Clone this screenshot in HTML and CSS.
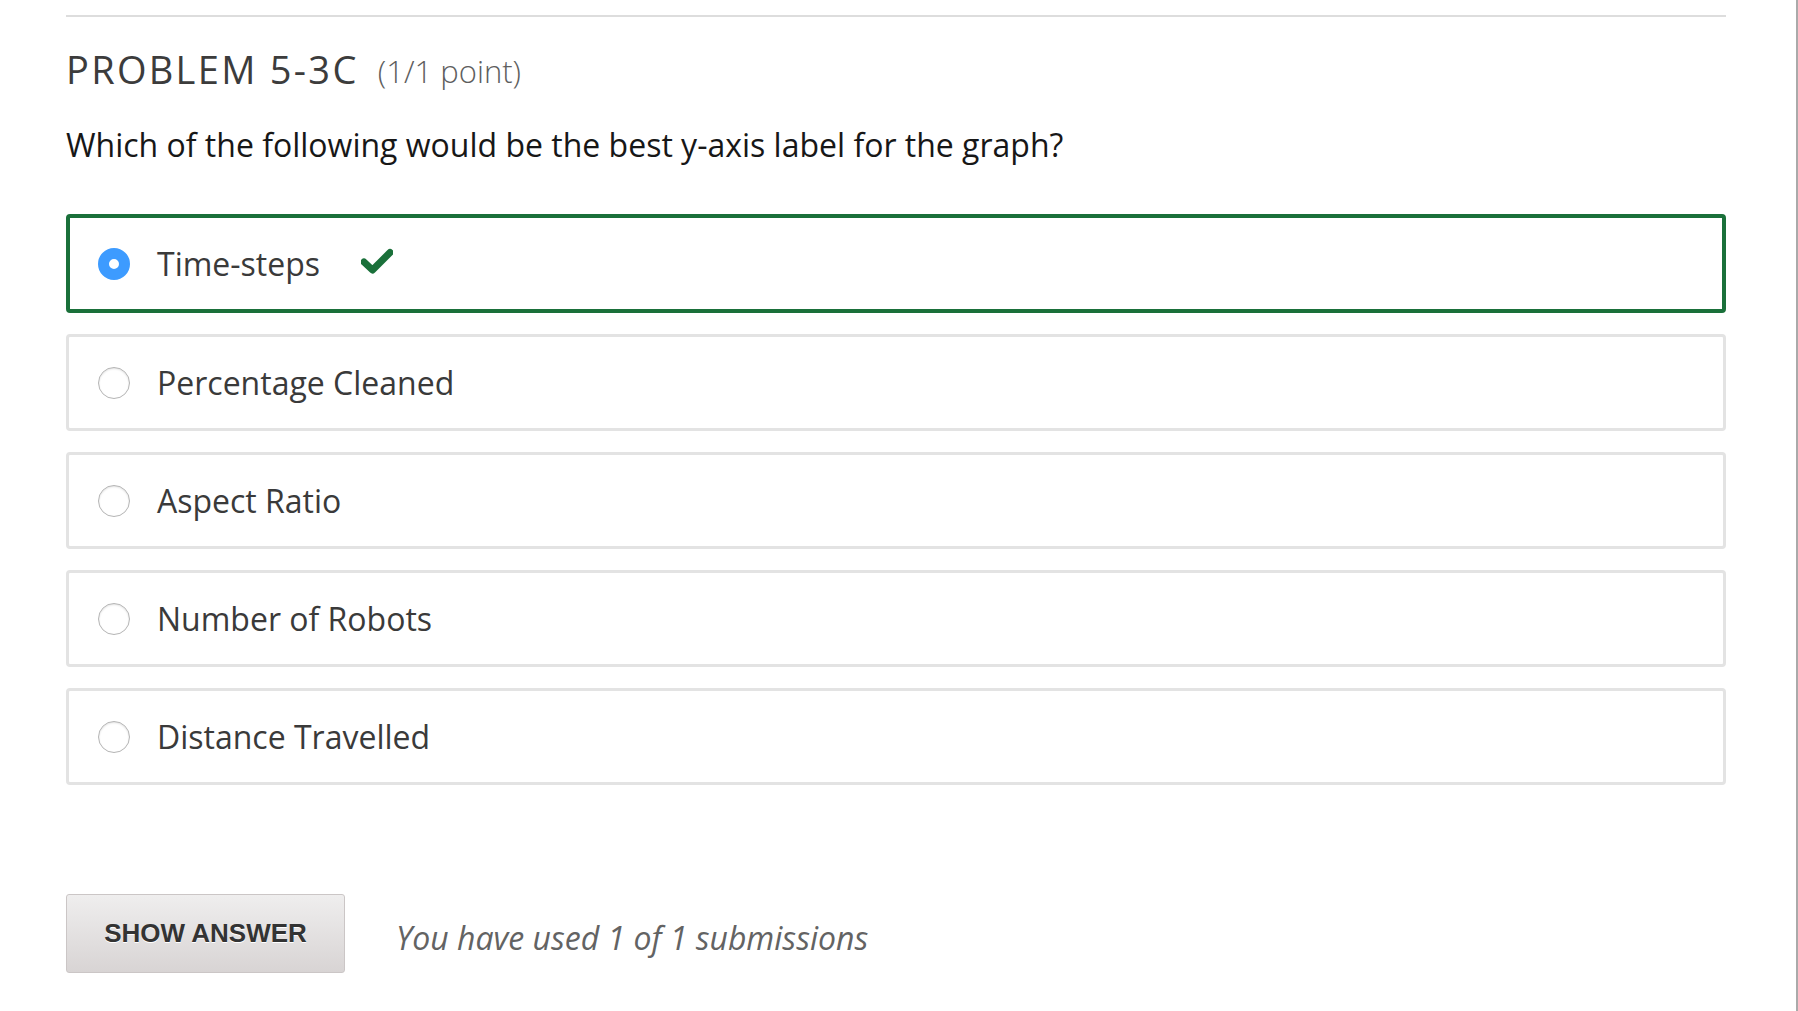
FILE: index.html
```html
<!DOCTYPE html>
<html>
<head>
<meta charset="utf-8">
<link rel="stylesheet" href="styles.css">
</head>
<body>
<div class="page">
  <div class="problem">
    <hr class="rule">
    <h2 class="title">PROBLEM 5-3C <span class="points">(1/1 point)</span></h2>
    <p class="question">Which of the following would be the best y-axis label for the graph?</p>
    <div class="choices">
      <label class="choice correct">
        <span class="radio checked"></span>
        <span class="label">Time-steps</span>
        <svg class="check" viewBox="0 0 32 26" width="32" height="26"><path d="M3 14 L11.5 22 L29 4.5" fill="none" stroke="#1a703a" stroke-width="7" stroke-linecap="round" stroke-linejoin="round"/></svg>
      </label>
      <label class="choice">
        <span class="radio"></span>
        <span class="label">Percentage Cleaned</span>
      </label>
      <label class="choice">
        <span class="radio"></span>
        <span class="label">Aspect Ratio</span>
      </label>
      <label class="choice">
        <span class="radio"></span>
        <span class="label">Number of Robots</span>
      </label>
      <label class="choice">
        <span class="radio"></span>
        <span class="label">Distance Travelled</span>
      </label>
    </div>
    <div class="actions">
      <button class="show-answer">SHOW ANSWER</button>
      <span class="submissions">You have used 1 of 1 submissions</span>
    </div>
  </div>
</div>
</body>
</html>
```

FILE: styles.css
```css
html, body {
  margin: 0;
  padding: 0;
  background: #fff;
}
body {
  font-family: "Open Sans", "Noto Sans", sans-serif;
  color: #313131;
}
.page {
  width: 1796px;
  height: 1011px;
  border-right: 2px solid #aaaaaa;
  box-sizing: content-box;
  overflow: hidden;
}
.problem {
  width: 1660px;
  padding-left: 66px;
  padding-top: 15px;
}
.rule {
  margin: 0;
  border: none;
  height: 2px;
  background: #dddddd;
}
.title {
  margin: 28px 0 0 0;
  font-weight: 400;
  font-size: 38px;
  letter-spacing: 2.3px;
  line-height: 48px;
  color: #3c3c3c;
}
.points {
  font-size: 31px;
  font-weight: 300;
  letter-spacing: 0;
  color: #5e5e5e;
  margin-left: 7px;
  position: relative;
  top: -1px;
}
.question {
  margin: 29px 0 0 0;
  font-size: 32px;
  line-height: 40px;
  color: #171717;
}
.choices {
  margin-top: 49px;
  display: flex;
  flex-direction: column;
  gap: 21px;
}
.choice {
  display: flex;
  align-items: center;
  height: 97px;
  box-sizing: border-box;
  border: 3px solid #e3e3e3;
  border-radius: 4px;
  padding-left: 29px;
}
.choice.correct {
  height: 99px;
  border: 4px solid #1a703a;
  padding-left: 28px;
}
.radio {
  width: 32px;
  height: 32px;
  box-sizing: border-box;
  border-radius: 50%;
  border: 1px solid #b5b5b5;
  box-shadow: inset 0 1px 2px rgba(0,0,0,0.12);
  background: #fff;
  flex: none;
}
.radio.checked {
  border: 11px solid #3d9bff;
  box-shadow: none;
}
.label {
  margin-left: 27px;
  font-size: 32px;
  color: #3a3a3a;
}
.check {
  margin-left: 41px;
  margin-top: -6px;
}
.actions {
  margin-top: 109px;
  display: flex;
  align-items: center;
}
.show-answer {
  width: 279px;
  height: 79px;
  border: 1px solid #cbc6c6;
  border-radius: 3px;
  background: linear-gradient(#efeeee, #d8d4d4);
  font-family: "Liberation Sans", Arial, sans-serif;
  font-weight: 700;
  font-size: 26px;
  color: #333;
  text-shadow: 0 1px 0 #fff;
  padding: 0;
}
.submissions {
  margin-left: 51px;
  margin-top: 8px;
  font-style: italic;
  font-size: 32px;
  color: #636363;
}
```
